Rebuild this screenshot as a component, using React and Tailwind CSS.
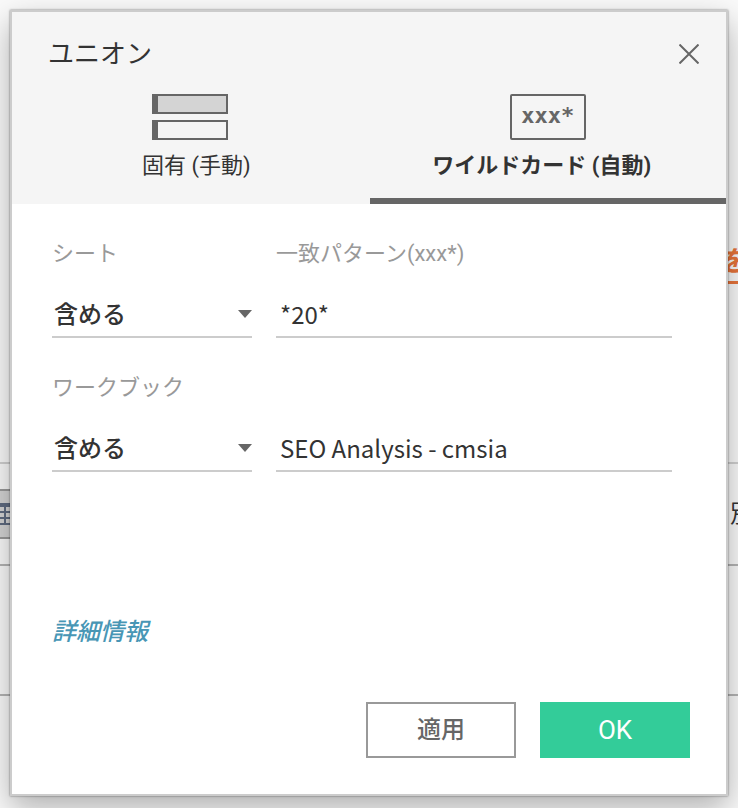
import { useState } from "react";

const FONT = "font-[Roboto,'Noto_Sans_CJK_JP',sans-serif]";

function Backdrop() {
  return (
    <div aria-hidden="true" className="absolute inset-0 flex flex-col overflow-hidden bg-[#fafafa]">
      <div className="flex h-[464px] shrink-0 items-start justify-end overflow-hidden border-b-2 border-[#d0d0d0] pt-[243px]">
        <span className="-mr-2 border-b-3 border-[#e8743b] text-[28px] leading-[38px] font-bold text-[#e8743b] italic">
          を
        </span>
      </div>
      <div className="flex h-[102px] shrink-0 items-center justify-between border-b-2 border-[#b4b4b4]">
        <div className="flex h-[50px] w-8 items-center border-y-2 border-[#999999] bg-[#d4d4d4]">
          <svg width="12" height="22" viewBox="0 0 12 22" fill="#5f6b80">
            <path d="M0 0h12v4H0zM0 8h12v2H0zM0 14h12v2H0zM0 20h12v2H0zM4 4h2v18H4z" />
          </svg>
        </div>
        <span className="-mr-4 text-2xl text-[#333333]">別</span>
      </div>
      <div className="h-[130px] shrink-0 border-b-2 border-[#b4b4b4]" />
    </div>
  );
}

function ManualIcon() {
  return (
    <svg width="76" height="46" viewBox="0 0 76 46" fill="none">
      <rect x="1" y="1" width="74" height="18" fill="#d4d4d4" stroke="#666666" strokeWidth="2" />
      <rect x="1" y="27" width="74" height="18" stroke="#666666" strokeWidth="2" />
      <path d="M0 0h6v20H0zM0 26h6v20H0z" fill="#666666" />
    </svg>
  );
}

function WildcardIcon() {
  return (
    <span className="flex h-[46px] w-[76px] justify-center rounded-xs border-2 border-[#666666] font-['DejaVu_Sans_Mono',monospace] text-[22px] leading-10 font-bold text-[#666666]">
      xxx*
    </span>
  );
}

function Tab({ active, onClick, icon, className, children }) {
  return (
    <button
      type="button"
      role="tab"
      aria-selected={active}
      onClick={onClick}
      className={`flex flex-1 flex-col items-center border-b-6 pb-4 text-[22px] leading-8 ${
        active ? "border-[#666666] font-bold" : "border-transparent"
      }`}
    >
      {icon}
      <span className={`mt-[10px] ${className}`}>{children}</span>
    </button>
  );
}

function MatchRow({ id, label, patternLabel, defaultValue }) {
  return (
    <div className="flex gap-6">
      <div className="w-[200px] shrink-0">
        <label htmlFor={`${id}-mode`} className="block h-8 text-[22px] leading-8 text-[#999999]">
          {label}
        </label>
        <div className="relative mt-5">
          <select
            id={`${id}-mode`}
            className="block h-12 w-full appearance-none border-b-2 border-[#cccccc] bg-transparent px-0.5 pt-1 text-2xl font-medium outline-none"
          >
            <option>含める</option>
            <option>除外する</option>
          </select>
          <svg
            className="pointer-events-none absolute top-5 right-0"
            width="14"
            height="8"
            viewBox="0 0 14 8"
            fill="#666666"
          >
            <path d="M0 0h14L7 8z" />
          </svg>
        </div>
      </div>
      <div className="flex-1">
        <label htmlFor={`${id}-pattern`} className="block h-8 text-[22px] leading-8 text-[#999999]">
          {patternLabel}
        </label>
        <input
          id={`${id}-pattern`}
          type="text"
          aria-label={patternLabel ? undefined : label}
          defaultValue={defaultValue}
          className="mt-5 block h-12 w-full border-b-2 border-[#cccccc] px-1 font-['Noto_Sans_CJK_JP',sans-serif] text-2xl outline-none"
        />
      </div>
    </div>
  );
}

export default function App() {
  const [tab, setTab] = useState("wildcard");

  return (
    <div className={`relative min-h-screen overflow-hidden p-[10px] pb-3 text-[#333333] ${FONT}`}>
      <Backdrop />
      <div
        role="dialog"
        aria-labelledby="union-title"
        className="relative flex min-h-[786px] flex-col border-2 border-[#cccccc] bg-white shadow-[0_0_2px_rgba(0,0,0,0.5),0_12px_30px_rgba(0,0,0,0.3)]"
      >
        <div className="bg-[#f5f5f5]">
          <div className="flex items-center justify-between pt-[22px] pr-[27px] pl-9">
            <h1 id="union-title" className="text-[26px] leading-10">
              ユニオン
            </h1>
            <button type="button" aria-label="閉じる">
              <svg width="20" height="20" viewBox="0 0 20 20" stroke="#666666" strokeWidth="2">
                <path d="M0.5 0.5l19 19M19.5 0.5l-19 19" />
              </svg>
            </button>
          </div>
          <div role="tablist" className="flex gap-px pt-5">
            <Tab
              active={tab === "manual"}
              onClick={() => setTab("manual")}
              icon={<ManualIcon />}
              className="pl-3"
            >
              固有 (手動)
            </Tab>
            <Tab
              active={tab === "wildcard"}
              onClick={() => setTab("wildcard")}
              icon={<WildcardIcon />}
              className="pr-3"
            >
              ワイルドカード (自動)
            </Tab>
          </div>
        </div>

        <div className="flex flex-col gap-[34px] pt-[34px] pr-[54px] pl-10">
          <MatchRow id="sheet" label="シート" patternLabel="一致パターン(xxx*)" defaultValue="*20*" />
          <MatchRow id="workbook" label="ワークブック" defaultValue="SEO Analysis - cmsia" />
        </div>

        <div className="mt-auto pr-9 pb-9 pl-10">
          <a href="#details" className="text-2xl leading-9 font-medium text-[#4896b5] italic">
            詳細情報
          </a>
          <div className="mt-[52px] flex justify-end gap-6">
            <button
              type="button"
              className="h-14 w-[150px] border-2 border-[#999999] bg-white text-2xl font-medium text-[#666666]"
            >
              適用
            </button>
            <button type="button" className="h-14 w-[150px] bg-[#33cc99] text-[26px] text-white">
              OK
            </button>
          </div>
        </div>
      </div>
    </div>
  );
}
